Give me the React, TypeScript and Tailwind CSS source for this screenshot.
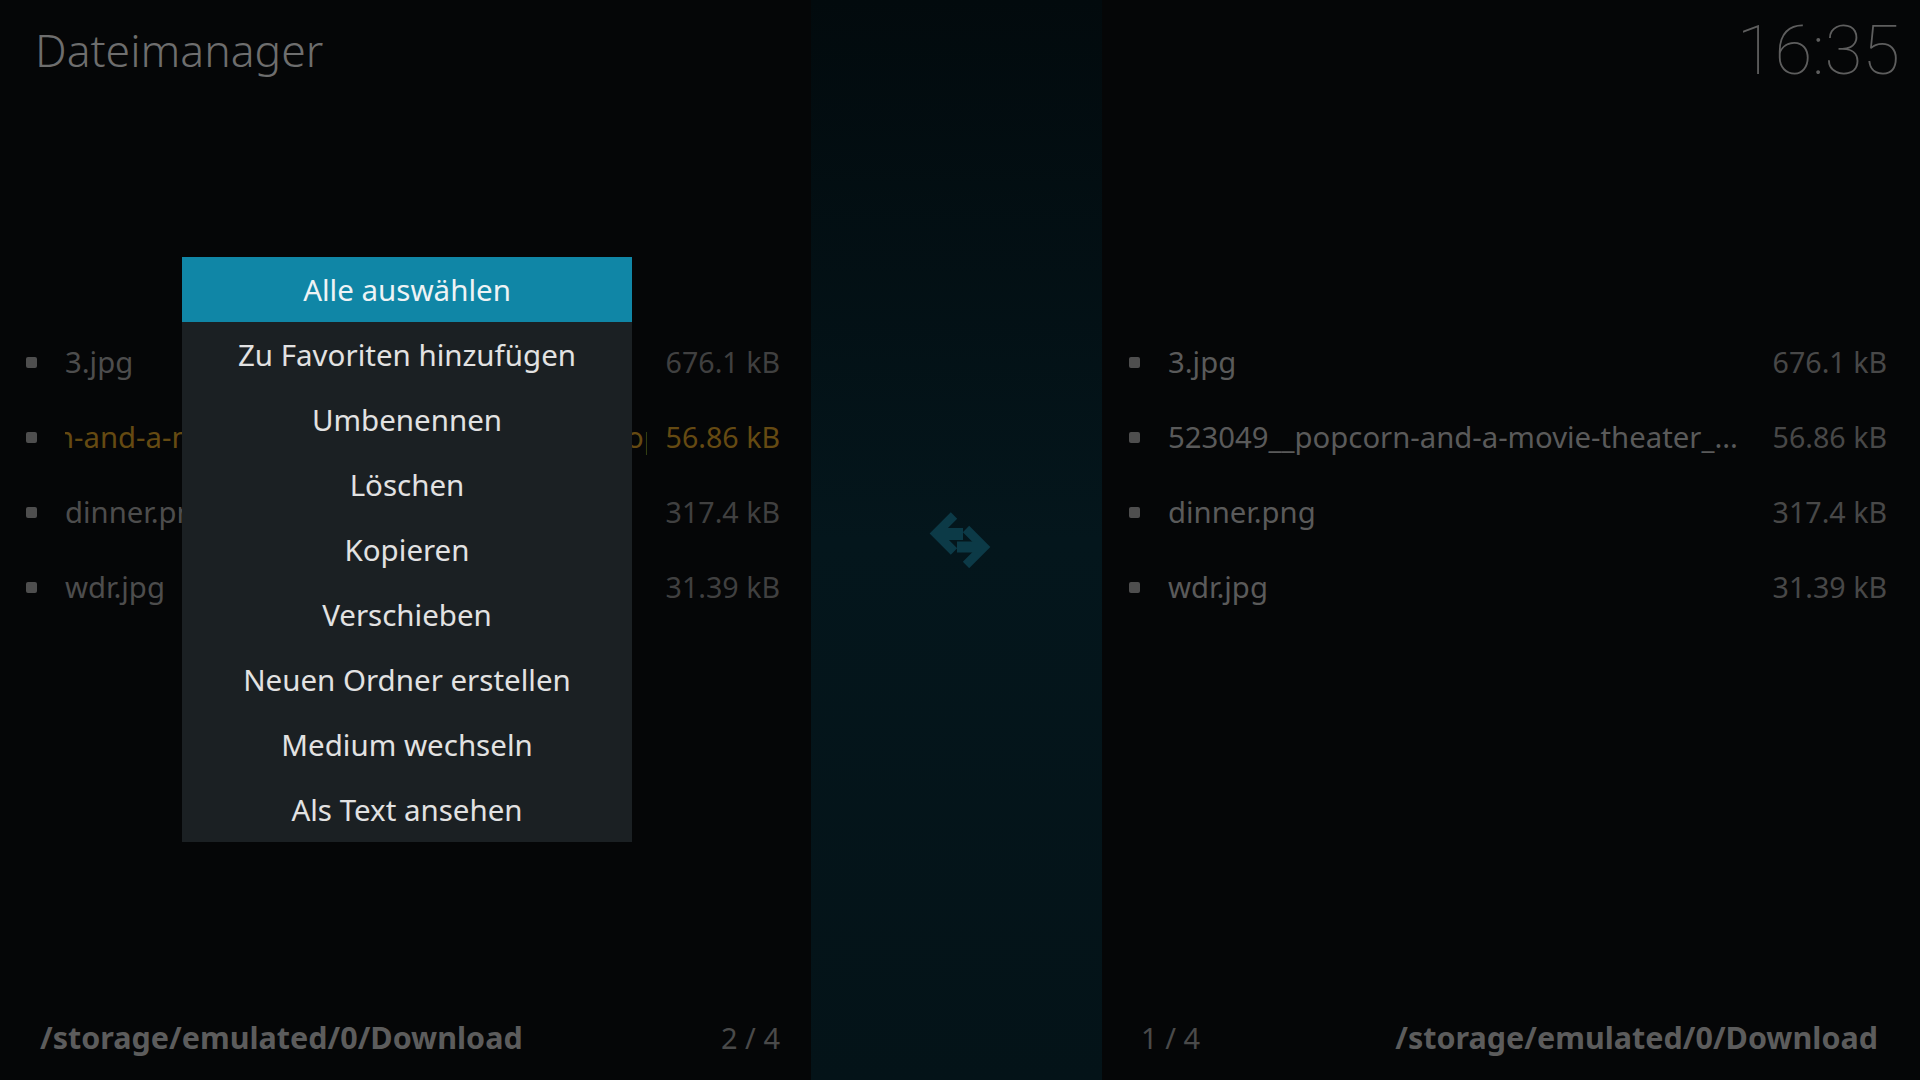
import React from "react";

const SANS = "font-['Noto_Sans',sans-serif]";

type Row = { name: string; size: string; active?: boolean };

const leftRows: Row[] = [
  { name: "3.jpg", size: "676.1 kB" },
  { name: "n-and-a-movie-theater_stock-photo-desktop.jpg", size: "56.86 kB", active: true },
  { name: "dinner.png", size: "317.4 kB" },
  { name: "wdr.jpg", size: "31.39 kB" },
];

const rightRows: Row[] = [
  { name: "3.jpg", size: "676.1 kB" },
  { name: "523049__popcorn-and-a-movie-theater_...", size: "56.86 kB" },
  { name: "dinner.png", size: "317.4 kB" },
  { name: "wdr.jpg", size: "31.39 kB" },
];

const menuItems = [
  "Alle auswählen",
  "Zu Favoriten hinzufügen",
  "Umbenennen",
  "Löschen",
  "Kopieren",
  "Verschieben",
  "Neuen Ordner erstellen",
  "Medium wechseln",
  "Als Text ansehen",
];

function ListRow({ row, side }: { row: Row; side: "left" | "right" }) {
  const nameColor = row.active
    ? "text-[#654a12]"
    : side === "left"
    ? "text-[#4d4d4d]"
    : "text-[#5a5a5a]";
  const sizeColor = row.active
    ? "text-[#654a12]"
    : side === "left"
    ? "text-[#404040]"
    : "text-[#484848]";
  return (
    <div className="flex h-[75px] items-center">
      <div className="h-[11px] w-[11px] shrink-0 rounded-[2px] bg-[#4e4e4e]" />
      <div className="ml-[28px] min-w-0 flex-1 overflow-hidden">
        <div
          className={`whitespace-nowrap text-[29.3px] ${nameColor} ${
            row.active ? "ml-[-9px]" : ""
          }`}
        >
          {row.name}
        </div>
      </div>
      <div className={`ml-[19px] shrink-0 whitespace-nowrap text-right text-[28.6px] ${sizeColor}`}>
        {row.size}
      </div>
    </div>
  );
}

function SwapIcon() {
  return (
    <svg width="62" height="56" viewBox="0 0 62 56" className="ml-[7px]">
      <polyline
        points="25,3.5 7,21.5 25,39.5"
        fill="none"
        stroke="#0c3a47"
        strokeWidth="9"
        strokeLinejoin="miter"
      />
      <rect x="13" y="16" width="21" height="12" fill="#0c3a47" />
      <polyline
        points="37,17 55,35 37,53"
        fill="none"
        stroke="#0c3a47"
        strokeWidth="9"
        strokeLinejoin="miter"
      />
      <rect x="28" y="29.5" width="22" height="11" fill="#0c3a47" />
    </svg>
  );
}

export default function App() {
  return (
    <div className={`relative flex h-[1080px] w-[1920px] overflow-hidden bg-[#050607] ${SANS}`}>
      {/* Left pane */}
      <div className="flex h-full w-[811px] shrink-0 flex-col">
        <div className="flex h-[100px] items-center pl-[35px]">
          <span className="text-[44.5px] font-light leading-none text-[#6e6e6e]">Dateimanager</span>
        </div>
        <div className="flex-1 pl-[26px] pr-[31px] pt-[225px]">
          {leftRows.map((r, i) => (
            <ListRow key={i} row={r} side="left" />
          ))}
        </div>
        <div className="flex h-[84px] items-center justify-between pl-[40px] pr-[31px]">
          <span className="text-[30.5px] font-bold text-[#5c5c5c]">/storage/emulated/0/Download</span>
          <span className="text-[29px] text-[#4a4a4a]">2 / 4</span>
        </div>
      </div>

      {/* Middle pane */}
      <div className="flex h-full w-[291px] shrink-0 items-center justify-center bg-gradient-to-b from-[#020a0d] via-[#04161c] to-[#041318]">
        <SwapIcon />
      </div>

      {/* Right pane */}
      <div className="flex h-full flex-1 flex-col">
        <div className="flex h-[100px] items-center justify-end pr-[20px]">
          <span className="font-['Roboto',sans-serif] text-[69px] font-thin leading-none text-[#5e5e5e]">
            16:35
          </span>
        </div>
        <div className="flex-1 pl-[27px] pr-[33px] pt-[225px]">
          {rightRows.map((r, i) => (
            <ListRow key={i} row={r} side="right" />
          ))}
        </div>
        <div className="flex h-[84px] items-center justify-between pl-[39px] pr-[42px]">
          <span className="text-[29px] text-[#4a4a4a]">1 / 4</span>
          <span className="text-[30.5px] font-bold text-[#5c5c5c]">/storage/emulated/0/Download</span>
        </div>
      </div>

      {/* Context menu dialog */}
      <div className="absolute left-[182px] top-[257px] w-[450px] bg-[#1b2023]">
        {menuItems.map((m, i) => (
          <div
            key={m}
            className={`flex h-[65px] items-center justify-center pt-[2px] text-[29.5px] ${
              i === 0 ? "bg-[#1086a6] text-[#eef3f5]" : "text-[#e2e2e2]"
            }`}
          >
            {m}
          </div>
        ))}
      </div>
    </div>
  );
}
